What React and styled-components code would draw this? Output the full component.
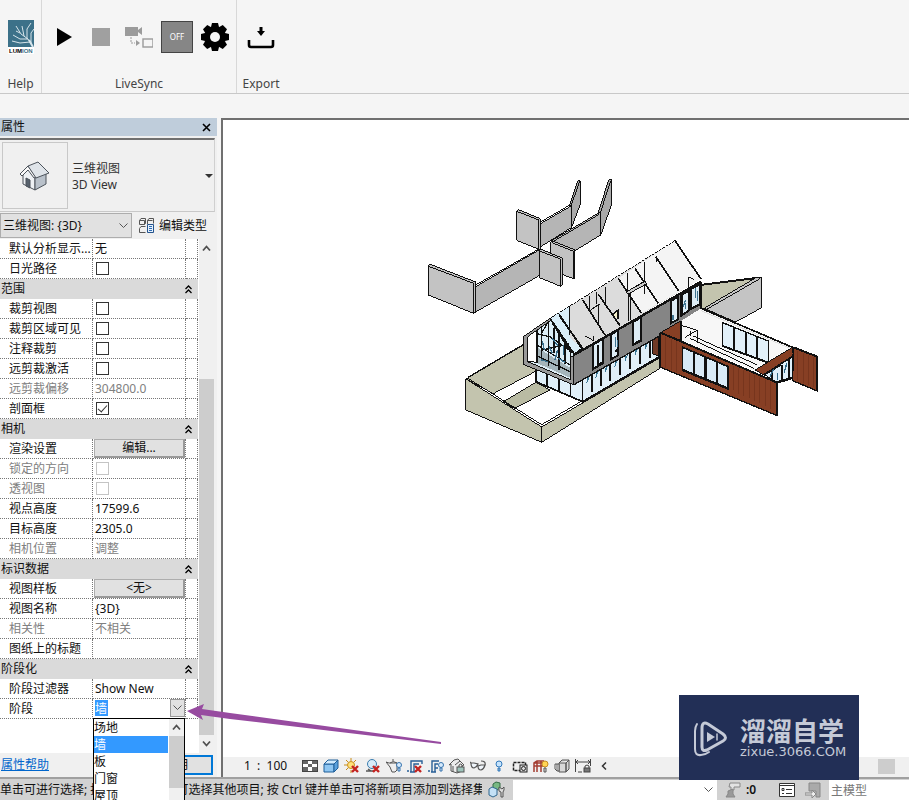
import React from "react";
import styled, { createGlobalStyle } from "styled-components";

export default function App() {
  return (
    <Page>
      <GlobalStyle />
      <Ribbon />
      <Workspace>
        <PropertiesPanel />
        <ViewWindow />
      </Workspace>
      <StatusBar />
      <Pointer viewBox="0 0 256 42" aria-hidden="true">
        <path d="M1 8 18 1 16 6 44 10 255 39 255 41 44 16 15 12 17 17Z" fill="#974ba0" />
      </Pointer>
      <Watermark>
        <BrandLogo />
        <div>
          <BrandName>溜溜自学</BrandName>
          <BrandUrl>zixue.3066.COM</BrandUrl>
        </div>
      </Watermark>
    </Page>
  );
}

/* ---------- ribbon ---------- */

function Ribbon() {
  return (
    <RibbonBar>
      <RibbonGroup>
        <Tools>
          <ToolButton aria-label="Help" $narrow>
            <LumionLogo />
          </ToolButton>
        </Tools>
        <GroupLabel>Help</GroupLabel>
      </RibbonGroup>
      <RibbonGroup>
        <Tools>
          <ToolButton aria-label="Play">
            <svg width="18" height="20" viewBox="0 0 18 20">
              <path d="M3 1 18 10 3 19Z" />
            </svg>
          </ToolButton>
          <ToolButton aria-label="Stop">
            <svg width="18" height="18">
              <rect width="18" height="18" fill="#a0a0a0" />
            </svg>
          </ToolButton>
          <ToolButton aria-label="Camera">
            <svg width="28" height="22" viewBox="0 0 28 22" fill="#9b9b9b">
              <path d="M0 1h13v3l4-3v8l-4-3v4H0Z" />
              <path d="M6 11v6h4" fill="none" stroke="#9b9b9b" strokeDasharray="2 1" />
              <path d="m11 14 4 3-4 3Z" />
              <rect x="18" y="13" width="10" height="8" fill="none" stroke="#9b9b9b" strokeWidth="1.4" />
            </svg>
          </ToolButton>
          <ToolButton aria-label="Live off">
            <OffBox>OFF</OffBox>
          </ToolButton>
          <ToolButton aria-label="Settings">
            <svg width="28" height="28" viewBox="-14 -14 28 28">
              {[0, 45, 90, 135].map((angle) => (
                <path key={angle} d="M-4-10-3-14H3L4-10V10L3 14H-3L-4 10Z" transform={`rotate(${angle})`} />
              ))}
              <circle r="10.5" />
              <circle r="5" fill="#f5f5f5" />
            </svg>
          </ToolButton>
        </Tools>
        <GroupLabel>LiveSync</GroupLabel>
      </RibbonGroup>
      <RibbonGroup $last>
        <Tools>
          <ToolButton aria-label="Export">
            <svg width="28" height="24" viewBox="0 0 28 24">
              <path d="M12.500 2h3v4H18l-4 5-4-5h2.500Z" />
              <path d="M2 15v5q0 2 2 2h20q2 0 2-2v-5" fill="none" stroke="#000" strokeWidth="2.600" />
            </svg>
          </ToolButton>
        </Tools>
        <GroupLabel>Export</GroupLabel>
      </RibbonGroup>
    </RibbonBar>
  );
}

function LumionLogo() {
  return (
    <svg width="26" height="34" viewBox="0 0 26 34">
      <rect width="26" height="34" fill="#fff" />
      <rect width="26" height="27" fill="#3c7189" />
      <g fill="none" stroke="#d6e4ea" strokeWidth="1">
        <path d="M25 27 20 19 13 14 8 6M16 16 14 6M19 19 19 9 23 3M20 19 12 19 5 15M22 22 12 23 4 21M23 24 23 13 26 9M8 11 12 13" />
        <path d="M25 27 21 20" strokeWidth="2" />
      </g>
      <text x="1" y="33" fontSize="6" fontWeight="700" fontFamily="Liberation Sans, sans-serif">
        LUM<tspan fill="#3c7189">ION</tspan>
      </text>
    </svg>
  );
}

/* ---------- properties panel ---------- */

const SECTIONS = [
  {
    rows: [
      { label: "默认分析显示...", text: "无" },
      { label: "日光路径", check: true },
    ],
  },
  {
    title: "范围",
    rows: [
      { label: "裁剪视图", check: true },
      { label: "裁剪区域可见", check: true },
      { label: "注释裁剪", check: true },
      { label: "远剪裁激活", check: true },
      { label: "远剪裁偏移", text: "304800.0", disabled: true },
      { label: "剖面框", check: true, checked: true },
    ],
  },
  {
    title: "相机",
    rows: [
      { label: "渲染设置", button: "编辑..." },
      { label: "锁定的方向", check: true, disabled: true },
      { label: "透视图", check: true, disabled: true },
      { label: "视点高度", text: "17599.6" },
      { label: "目标高度", text: "2305.0" },
      { label: "相机位置", text: "调整", disabled: true },
    ],
  },
  {
    title: "标识数据",
    rows: [
      { label: "视图样板", button: "<无>" },
      { label: "视图名称", text: "{3D}" },
      { label: "相关性", text: "不相关", disabled: true },
      { label: "图纸上的标题", text: "" },
    ],
  },
  {
    title: "阶段化",
    rows: [
      { label: "阶段过滤器", text: "Show New" },
      { label: "阶段", phase: true },
    ],
  },
];

const PHASES = ["场地", "墙", "板", "门窗", "屋顶"];

function PropertiesPanel() {
  return (
    <Panel>
      <PanelTitle>
        属性
        <CloseButton aria-label="Close">
          <svg width="9" height="9" viewBox="0 0 9 9">
            <path d="m1 1 7 7M8 1 1 8" stroke="#000" strokeWidth="1.600" />
          </svg>
        </CloseButton>
      </PanelTitle>
      <TypeSelector>
        <TypeThumb>
          <HouseIcon />
        </TypeThumb>
        <TypeName>
          三维视图
          <br />
          3D View
        </TypeName>
        <TypeArrow aria-label="Type">
          <svg width="8" height="4" viewBox="0 0 8 4">
            <path d="M0 0h8L4 4Z" fill="#333" />
          </svg>
        </TypeArrow>
      </TypeSelector>
      <FilterRow>
        <SelectWrap>
          <FilterSelect aria-label="View">
            <option>三维视图: {"{3D}"}</option>
          </FilterSelect>
          <Chevron />
        </SelectWrap>
        <EditType>
          <svg width="17" height="17" viewBox="0 0 17 17" fill="none" stroke="#555">
            <path d="M1.500 3.500 3 1.500h4.500v5l-1 1h-5ZM9.500 7V3.500L11 1.500h4.500v5M1.500 11.500 3 9.500h4.500M1.500 11.500v4h6M1.500 3.500h5v4M9.500 3.500h5" />
            <path d="M9.500 7.500h6v8h-6Z" fill="#e6f0fb" stroke="#24538c" />
            <path d="M11 9.500h3M11 11.500h3M11 13.500h3" stroke="#2c6cb5" />
          </svg>
          编辑类型
        </EditType>
      </FilterRow>
      <GridArea>
        <PropTable>
          <colgroup>
            <col />
            <col width="93" />
            <col width="12" />
          </colgroup>
          {SECTIONS.map((section, i) => (
            <tbody key={i}>
              {section.title && (
                <SectionRow>
                  <th colSpan="3">
                    <SectionHead>
                      {section.title}
                      <svg width="7" height="9" viewBox="0 0 7 9" fill="none" stroke="#000" strokeWidth="1.300">
                        <path d="m.5 4 3-3 3 3M.5 8l3-3 3 3" />
                      </svg>
                    </SectionHead>
                  </th>
                </SectionRow>
              )}
              {section.rows.map((row) => (
                <PropRow key={row.label} row={row} />
              ))}
            </tbody>
          ))}
        </PropTable>
        <ScrollTrack>
          <ArrowGlyph up />
          <ScrollThumb />
          <ArrowGlyph />
        </ScrollTrack>
      </GridArea>
      <PanelFooter>
        <a href="#help">属性帮助</a>
        <ApplyButton>应用</ApplyButton>
      </PanelFooter>
    </Panel>
  );
}

function PropRow({ row }) {
  const id = `prop-${row.label}`;
  const field = row.check || row.phase;
  return (
    <Row $disabled={row.disabled}>
      <LabelCell>{field ? <label htmlFor={id}>{row.label}</label> : row.label}</LabelCell>
      <ValueCell $flush={row.button || row.phase}>
        {row.text}
        {row.check && <Check id={id} type="checkbox" defaultChecked={row.checked} disabled={row.disabled} />}
        {row.button && <CellButton>{row.button}</CellButton>}
        {row.phase && <PhaseField id={id} />}
      </ValueCell>
      <td />
    </Row>
  );
}

function PhaseField({ id }) {
  return (
    <PhaseBox>
      <PhaseSelect id={id} defaultValue="墙">
        {PHASES.map((phase) => (
          <option key={phase}>{phase}</option>
        ))}
      </PhaseSelect>
      <PhaseArrow>
        <Chevron />
      </PhaseArrow>
      <PhaseMenu>
        <PhaseList role="listbox" aria-label="阶段">
          {PHASES.map((phase) => (
            <PhaseOption key={phase} role="option" aria-selected={phase === "墙"} $active={phase === "墙"}>
              {phase}
            </PhaseOption>
          ))}
        </PhaseList>
        <MenuTrack>
          <ArrowGlyph up />
          <MenuThumb />
        </MenuTrack>
      </PhaseMenu>
    </PhaseBox>
  );
}

function Chevron() {
  return (
    <svg width="9" height="6" viewBox="0 0 9 6" fill="none" stroke="#555">
      <path d="m.5.500 4 4 4-4" />
    </svg>
  );
}

function ArrowGlyph({ up }) {
  return (
    <svg width="9" height="7" viewBox="0 0 9 7" fill="none" stroke="#505050" strokeWidth="1.800">
      <path d={up ? "m1 5.500 3.500-4L8 5.500" : "m1 1.500 3.500 4L8 1.500"} />
    </svg>
  );
}

function HouseIcon() {
  return (
    <svg width="30" height="30" viewBox="0 0 30 30" stroke="#4c535b" strokeLinejoin="round">
      <path d="M3 14v9l12 6V15L9 8Z" fill="#eef1f4" />
      <path d="m15 17 11-6v12l-11 6Z" fill="#b9c1ca" />
      <path d="M0 13 8 5l8 11-2 1-6-8-6 6Z" fill="#fafafa" />
      <path d="m8 5 10-4 11 11-13 5Z" fill="#dfe4e9" />
      <path d="M6 17v8l4 2v-8Z" fill="#56616c" />
    </svg>
  );
}

/* ---------- view window ---------- */

const VIEW_TOOLS = [
  [
    "Detail level",
    <g key="i">
      <rect x=".5" y="2.500" width="15" height="11" fill="#fff" stroke="#444" />
      <path d="M1 3h5v3H1Zm9 0h5v3h-5ZM6 6h4v3H6ZM1 9h5v4H1Zm9 0h5v4h-5Z" fill="#666" />
    </g>,
  ],
  [
    "Visual style",
    <g key="i" stroke="#1f5f99" strokeLinejoin="round">
      <path d="M1 6h10v8H1Z" fill="#8ec6f2" />
      <path d="m1 6 4-4h10l-4 4Z" fill="#d1eafd" />
      <path d="m11 6 4-4v8l-4 4Z" fill="#5aa0dc" />
    </g>,
  ],
  [
    "Sun path",
    <g key="i">
      <path d="M7 0v3M7 12v3M0 7h3M2 2l2 2M12 2l-2 2M2 12l2-2" stroke="#c98c17" />
      <circle cx="7" cy="7" r="3.500" fill="#ffe27a" stroke="#c98c17" />
      <RedCross />
    </g>,
  ],
  [
    "Shadows",
    <g key="i">
      <circle cx="7" cy="6" r="4.500" fill="#d8ebf8" stroke="#3a7cae" />
      <path d="M1 13h8M3 11l3 2" stroke="#555" strokeWidth="1.500" />
      <RedCross />
    </g>,
  ],
  [
    "Rendering",
    <g key="i" fill="#eee" stroke="#555">
      <path d="M4 5h7v7l-2 2H6L4 9 0 4l3 1ZM4 5q3-3 7 0M7 3V1" />
      <Bulb />
    </g>,
  ],
  [
    "Crop view",
    <g key="i" fill="none" stroke="#285f97" strokeWidth="1.400">
      <path d="M4 14V3h11v3M0 13h2M7 14V6h5M3 14h5" />
      <RedCross />
    </g>,
  ],
  [
    "Crop region",
    <g key="i" fill="none" stroke="#285f97" strokeWidth="1.400">
      <path d="M4 14V3h7M0 13h2M7 14V6h3M3 14h5M7 10h3" />
      <Bulb />
    </g>,
  ],
  [
    "Locked view",
    <g key="i" stroke="#555" fill="#ececec">
      <path d="M2 13V6L0 7l5-5 4-1 6 6-2 1v5L8 15Z" />
      <path d="M4 8v6M6 7l5-4" />
      <rect x="8" y="9" width="7" height="5" fill="#9ec4bb" />
      <path d="M10 9V7q2-2 3 0v2" fill="none" />
    </g>,
  ],
  [
    "Temporary hide",
    <g key="i" fill="#eef4fa" stroke="#555" strokeWidth="1.200">
      <path d="M1 5q0 5 3 5 3-1 4-4L4 5ZM8 8q0 4 3 4 3-1 4-5l-4 0Z" />
      <path d="M1 5 0 4M15 7q1-4-4-4" fill="none" />
    </g>,
  ],
  [
    "Reveal hidden",
    <g key="i">
      <circle cx="8" cy="6" r="3" fill="#c5e3fc" stroke="#3279bb" />
      <path d="M7 10h2v3H7Z" fill="#8cb5d8" stroke="#3279bb" />
    </g>,
  ],
  [
    "View properties",
    <g key="i" fill="none" stroke="#222">
      <path d="M1.500 4.500h12v8h-12Z" strokeDasharray="3 1" strokeWidth="1.500" />
      <rect x="8" y="7" width="7" height="7" fill="#ddd" />
      <circle cx="11.500" cy="10.500" r="2" />
    </g>,
  ],
  [
    "Analytical model",
    <g key="i" fill="none" stroke="#a33c31">
      <path d="M1 14V5l3-2h7M1 8h9M4 14V3M8 14V3M1 5h8" strokeWidth="1.500" />
      <circle cx="12" cy="6" r="3" fill="#ffd455" stroke="#c68a22" />
      <path d="M11 10h2v4h-2Z" stroke="#555" fill="#ddd" />
    </g>,
  ],
  [
    "Displacement",
    <g key="i" fill="#d8d8d8" stroke="#555">
      <path d="m5 5 3-3h7l-3 3v9l3-3V2M5 5h7v9H5Z" />
      <path d="M5 6H1v5l2 2h2ZM3 6v7" fill="#fff" />
    </g>,
  ],
  [
    "Constraints",
    <g key="i" fill="none" stroke="#444">
      <path d="M.5 1v13M15.500 1v7M1 4h14M3 2 1 4l2 2M13 2l2 2-2 2M3 14h4" />
      <rect x="9" y="10" width="6" height="4" fill="#777" />
      <path d="M10 10V8q2-2 4 0v2" />
    </g>,
  ],
];

function RedCross() {
  return <path d="m8 8 6 6M14 8l-6 6" fill="none" stroke="#c32320" strokeWidth="2.400" />;
}

function Bulb() {
  return (
    <g fill="#d6eafc" stroke="#3673ad" strokeWidth="1">
      <circle cx="13" cy="7" r="2.500" />
      <path d="M12 10h2v3h-2Z" />
    </g>
  );
}

function ViewWindow() {
  return (
    <ViewPane>
      <Canvas>
        <Model />
      </Canvas>
      <ViewBar>
        <Scale>{"1  :  100"}</Scale>
        {VIEW_TOOLS.map(([name, art]) => (
          <ViewTool key={name} aria-label={name}>
            <svg width="16" height="16" viewBox="0 0 16 16">
              {art}
            </svg>
          </ViewTool>
        ))}
        <ViewTool aria-label="Collapse">
          <svg width="6" height="8" viewBox="0 0 6 8">
            <path d="M5 .5 1.500 4 5 7.500" fill="none" stroke="#333" strokeWidth="1.500" />
          </svg>
        </ViewTool>
        <HorizontalThumb />
      </ViewBar>
    </ViewPane>
  );
}

function Model() {
  return (
    <ModelSvg viewBox="420 170 410 280" role="img" aria-label="3D View">
      <FreeWalls />
      <House />
      <Wing />
    </ModelSvg>
  );
}

// each part of the model is drawn in thirds of a pixel
function FreeWalls() {
  return (
    <g transform="translate(415 170) scale(.33333)" fill="#c3c3c3" stroke="#111" strokeWidth="3">
      <path d="m463 108 25-76 8 0v70l-26 70-2-64Z" fill="#aaa" />
      <path d="m468 108 26-74" />
      <path d="m375 162 93-54 2 64-85 53-10 10Z" fill="#b5b5b5" />
      <path d="m375 157 90-52" />
      <path d="m305 122 5-3 66 27v90l-3 2-68-27Z" />
      <path d="m305 124 67 26v86M376 148v88" fill="none" />
      <path d="m549 130 32-100 9 0v73l-33 93-3-66Z" fill="#aaa" />
      <path d="m555 132 32-100" />
      <path d="m408 213 141-83 8-2v67l-77 47Z" fill="#b5b5b5" />
      <path d="m410 217 143-84" />
      <path d="m408 215 5-2 67 27v84l-5 2-67-26Z" />
      <path d="m411 218 64 26v80" fill="none" />
      <path d="m182 350 190-110 2 76-192 110Z" fill="#b5b5b5" />
      <path d="m182 345 190-108" />
      <path d="m374 240 4-2 64 26v82l-5 3-63-26Z" />
      <path d="m374 243 62 24v80" fill="none" />
      <path d="m40 286 6-3 136 53v90l-6 4-136-55Z" />
      <path d="m41 289 135 51v88" fill="none" />
    </g>
  );
}

const GROUND_MULLIONS = [411, 438, 466, 495, 526, 556, 586];
const WALL_WINDOWS = [
  "M415 328 443 312V385L415 402Z",
  "M467 299 490 286V360L467 374Z",
  "M533 262 557 248V318L533 330Z",
  "M647 198 670 185V253L647 265Z",
  "M682 178 703 166V226L682 240Z",
  "M709 162 735 147V208L709 221Z",
];

function House() {
  return (
    <g transform="translate(455 235) scale(.33333)" fill="none" stroke="#111" strokeWidth="3">
      <g fill="#c3c4ae">
        <path d="m33 432 172-102 8 58 60 25-158 63Z" />
        <path d="m115 476 125-66 6 30-101 60Z" fill="#fff" stroke="none" />
        <path d="m145 500 98-58 42 23-107 55Z" fill="#b9bba3" />
        <path d="m33 432 227 144v46L33 525Z" />
        <path d="m260 576 355-208 3 30-358 224Z" />
      </g>
      <path d="m39 430 221 139 352-207M38 427l167-99M115 476l125-66" />
      <path d="m243 398 112 42 257-145v72L383 500l-140-60Z" fill="#e0eff8" />
      <path d="m243 440 140 60 230-135" strokeWidth="5" />
      <path d="M243 405v36M276 410v46M312 430v42M347 445v42M383 438v62" strokeWidth="5" />
      {GROUND_MULLIONS.map((x) => (
        <g key={x}>
          <path d={`M${x} ${436 - (x - 383) * 0.58}v50`} strokeWidth="5" />
          <path d={`m${x - 8} ${440 - (x - 383) * 0.58}-8 20m2-14v12`} stroke="#3a7795" strokeWidth="3" />
        </g>
      ))}
      <path d="m592 310 20-14v68l-20-8Z" fill="#703a26" />

      <path d="m285 250 375-233 78 115-381 228Z" fill="#dcdcdc" stroke="none" />
      <path d="m490 130 170-113 78 115-178 103Z" fill="#f4f4f4" stroke="none" />
      <path d="m285 250 60-38v95l35 33-24 20Z" fill="#d9edf8" stroke="none" />
      <path d="m285 250 375-233" strokeDasharray="9 3" />
      <path d="m660 17 78 115M602 65l68 102M540 100l70 105M490 130l70 105M430 178l65 94M383 195l67 105M313 238l67 102" strokeWidth="5" />
      <path d="M343 213v88M404 183v44l28-18v64M452 155v52M568 82v58M518 115v54l52-32M520 176v82M528 172v82M568 140v38M412 220l24-14M424 172v36" />
      <path d="m515 170 56-31 3 8-56 31Z" fill="#ccc" />
      <path d="m474 239 15-14v28" fill="#f5f0cb" strokeWidth="4" />
      <path d="M700 126v50M700 126l18 8M604 68v14M390 303l26 14v-14" />

      <path d="m357 360 381-220v92L355 450Z" fill="#858585" stroke="none" />
      <path d="m612 296 126-74v10l-126 74Z" fill="#aaa" stroke="none" />
      <path d="m357 360 381-220" strokeWidth="7" />
      <path d="m355 450 383-218v-92" strokeWidth="4" />
      {WALL_WINDOWS.map((d) => (
        <path key={d} d={d} fill="#ddecf5" strokeWidth="6" />
      ))}
      <path d="M428 330v60l14-8M479 350l8-5M546 322l10-6M678 178v68M707 163v58" strokeWidth="6" />
      <path d="m692 195-8 20m8-10v16M722 158v30m5-20v30M481 305v30m6-20v20M654 240v14" stroke="#3d7390" strokeWidth="4" />

      <path d="m205 305 80-55 72 110v90l-152-62Z" fill="#dcedf6" />
      <path d="m218 302 26-18v98l-26-4Z" fill="#fff" />
      <path d="m250 340 95 58v30l-95-42Z" fill="#a4b4ba" stroke="none" />
      <path d="M246 285v98M260 275v90M281 258v136M313 285v120M347 335v96M298 280v74M330 312v74" strokeWidth="5" />
      <path d="m246 330 110 66M246 296l40 10 58 40M250 365l95 45M262 345l80-18M285 252l-24 40" strokeWidth="4" />
      <path d="m262 318 6 26m14-10 10 20m16-10-8 30m26-44v30m-34-50 16 22m-50 42 20 6m32-10 20 12" stroke="#356c8a" strokeWidth="4" />
      <path d="m205 305 80-55 4 5-71 50v75l130 55v-70h9v85l-152-62Z" fill="#9a9a9a" />
      <path d="m285 250 72 106M291 262l58 92M313 242l70 98-26 18" strokeWidth="5" />
    </g>
  );
}

function Wing() {
  return (
    <g transform="translate(640 260) scale(.33333)" fill="none" stroke="#111" strokeWidth="3">
      <path d="m183 76 160-20-150 90-8 0Z" fill="#c3c4ae" />
      <path d="m192 145 156-92h17v90l-78 43Z" fill="#c4c4c4" />
      <path d="m200 148 160-92M185 73l160-20" />
      <path d="m183 145 277 118-110 72-225-93v-60Z" fill="#f7f7f7" stroke="none" />
      <path d="m183 145 277 118" strokeWidth="5" />
      <path d="m183 152 268 113" stroke="#ddd" />
      <path d="M124 183v60M124 196l48 15v38M150 235l192 90M160 228l30 14 160 72M135 232l34-20M152 212v17" />
      <path d="m248 188 137 55v64l-137-50Z" fill="#e2f0f9" strokeWidth="4" />
      <path d="M283 204v66M318 218v66M352 231v66" strokeWidth="6" />
      <path d="m248 258 137 50" strokeWidth="6" />
      <path d="m372 342 85-50v64l-46 14Z" fill="#dff0fa" />
      <path d="M396 330v30M426 314v50M448 298v62M372 345l50-30M411 366l46-14" strokeWidth="5" />
      <path d="m440 310-8 30m-30-16-12 26m22-12v22" stroke="#316a88" strokeWidth="4" />
      <path d="m345 330 112-68 3 24-90 58Z" fill="#873f24" />
      <path d="m460 262 72 28v103l-74-31Z" fill="#873f24" strokeWidth="4" />
      <path d="m62 218 60-35v58Z" fill="#873f24" />
      <path d="m62 218 350 150v99L62 322Z" fill="#873f24" strokeWidth="4" />
      <path
        d="M78 230v94M94 236v94M110 243v94M280 318v72M296 325v76M312 331v76M328 338v76M344 346v78M360 352v78M376 359v78M392 366v80M474 272v90M490 278v90M506 284v92M520 290v92"
        stroke="#6f301a"
        strokeWidth="2"
      />
      <path d="m62 218 350 150v99" strokeWidth="6" />
      <path d="m460 262 72 28v103" strokeWidth="6" />
      <path d="m128 262 137 58v66L128 330Z" fill="#d9eaf6" strokeWidth="5" />
      <path d="M162 277v66M197 291v66M232 306v66M128 330l137 56" strokeWidth="7" />
      <path d="m60 218v105" strokeWidth="5" />
    </g>
  );
}

/* ---------- status bar and watermark ---------- */

function StatusBar() {
  return (
    <Status>
      <Hint>单击可进行选择; 按 Tab 键并单击可选择其他项目; 按 Ctrl 键并单击可将新项目添加到选择集。</Hint>
      <StatusIcon aria-label="Worksets">
        <svg width="17" height="17" viewBox="0 0 17 17" strokeLinejoin="round">
          <path d="m5 3 3-2 4 1v5l-3 2-4-2Z" fill="#78b883" stroke="#346c45" />
          <path d="m1 8 3-2 5 2v6l-4 2-4-2Z" fill="#c3e0f5" stroke="#31678e" />
          <path d="M11 6v4l2 1v5h2v-5l1-2V6l-2 2Z" fill="#ddd" stroke="#555" />
        </svg>
      </StatusIcon>
      <WorksetSelect>
        <BareSelect aria-label="Workset" />
        <Chevron />
      </WorksetSelect>
      <StatusIcon aria-label="Editing requests">
        <svg width="16" height="16" viewBox="0 0 16 16" fill="#e2e2e2" stroke="#888">
          <path d="M5 1h10v4H9v3H6V5H4Z" />
          <path d="m3 9 5-2v5l2 3H1l2-3Z" fill="#999" />
        </svg>
      </StatusIcon>
      <Count>:0</Count>
      <StatusIcon aria-label="Design options">
        <svg width="16" height="16" viewBox="0 0 16 16" fill="#fff" stroke="#333">
          <path d="M.5 1.500h15v13H.5Z" />
          <path d="M1 3.500h14M3 6.500h2v2H3ZM7 7.500h6M3 11.500h2M7 11.500h6" />
        </svg>
      </StatusIcon>
      <StatusIcon aria-label="Active option">
        <svg width="16" height="16" viewBox="0 0 16 16" fill="#aaa" stroke="#888">
          <path d="M4 1h11v14h-4V9H4Z" />
          <path d="M0 11h7V8l4 4-4 4v-3H0Z" fill="#eee" />
        </svg>
      </StatusIcon>
      <OptionSelect aria-label="Design option">
        <option>主模型</option>
      </OptionSelect>
    </Status>
  );
}

function BrandLogo() {
  return (
    <svg width="34" height="38" viewBox="0 0 34 38" fill="none" stroke="#c5cad7" strokeLinecap="round">
      <path d="M8 9v19q0 5 5 3l16-9q5-3 0-7L14 5Q8 2 8 9Z" strokeWidth="3" strokeLinejoin="round" />
      <path d="M3 5q-2 3-2 7v18q0 7 6 6 4 0 8-3" strokeWidth="2" />
      <path d="m13 13 8 5-8 5Z" fill="#c5cad7" stroke="none" />
      <path d="M23 15v6" strokeWidth="1.500" />
    </svg>
  );
}

/* ---------- styles ---------- */

const GlobalStyle = createGlobalStyle`
  * {
    box-sizing: border-box;
  }

  body {
    margin: 0;
    background: #f5f5f5;
    overflow: hidden;
  }

  body, button, select, input {
    font-family: "Noto Sans", "Noto Sans CJK SC", sans-serif;
    font-size: 12px;
    line-height: 16px;
    color: #111;
  }

  svg {
    display: block;
    flex: none;
  }
`;

const Page = styled.div`
  position: relative;
  height: 100vh;
  overflow: hidden;
  display: flex;
  flex-direction: column;
`;

const PlainButton = styled.button`
  border: none;
  background: none;
  padding: 0;
  display: flex;
  align-items: center;
  justify-content: center;
`;

const RibbonBar = styled.header`
  display: flex;
  flex: none;
  height: 94px;
  margin-bottom: 24px;
  border-bottom: 1px solid #c8c8c8;
`;

const RibbonGroup = styled.section`
  padding: 0 ${({ $last }) => ($last ? "5px" : "2px")};
  border-right: ${({ $last }) => ($last ? "none" : "1px solid #d8d8d8")};
`;

const Tools = styled.div`
  display: flex;
  justify-content: center;
  height: 74px;
`;

const ToolButton = styled(PlainButton)`
  width: ${({ $narrow }) => ($narrow ? "37px" : "38px")};
`;

const GroupLabel = styled.div`
  text-align: center;
  line-height: 20px;
  color: #444;
`;

const OffBox = styled.span`
  width: 32px;
  height: 32px;
  border: 1px solid #444;
  background: #868686;
  color: #fff;
  font-size: 8px;
  line-height: 30px;
`;

const Workspace = styled.main`
  display: flex;
  flex: 1;
  min-height: 0;
  gap: 4px;
`;

const Panel = styled.aside`
  display: flex;
  flex-direction: column;
  width: 217px;
  flex: none;
  background: #f0f0f0;
`;

const PanelTitle = styled.div`
  display: flex;
  justify-content: space-between;
  align-items: center;
  height: 18px;
  flex: none;
  margin-bottom: 2px;
  padding: 0 6px 0 1px;
  background: #bfcddb;
`;

const CloseButton = styled(PlainButton)`
  width: 9px;
  height: 16px;
`;

const TypeSelector = styled.div`
  display: flex;
  align-items: center;
  gap: 4px;
  margin-right: 2px;
  padding: 2px 1px 2px 2px;
  border-top: 2px solid #707070;
  border-right: 1px solid #d0d0d0;
  border-bottom: 1px solid #c8c8c8;
`;

const TypeThumb = styled.div`
  display: flex;
  align-items: center;
  justify-content: center;
  width: 66px;
  height: 67px;
  border: 1px solid #c8c8c8;
`;

const TypeName = styled.div`
  flex: 1;
  padding-top: 2px;
  color: #333;
`;

const TypeArrow = styled(PlainButton)`
  width: 8px;
  height: 20px;
`;

const FilterRow = styled.div`
  display: flex;
  align-items: center;
  gap: 6px;
  height: 27px;
  flex: none;
`;

const SelectWrap = styled.div`
  display: grid;
  align-items: center;
  width: 132px;

  > * {
    grid-area: 1 / 1;
  }

  > svg {
    justify-self: end;
    margin-right: 4px;
    pointer-events: none;
  }
`;

const BareSelect = styled.select`
  appearance: none;
  border: none;
  background: transparent;
  padding: 0;
  width: 100%;
  height: 100%;
`;

const FilterSelect = styled(BareSelect)`
  height: 25px;
  padding-left: 2px;
  border: 1px solid #adadad;
  background: #e1e1e1;
`;

const EditType = styled(PlainButton)`
  gap: 4px;
`;

const GridArea = styled.div`
  display: flex;
  flex: 1;
  align-items: flex-start;
  gap: 1px;
  background: #fff;
  margin-right: 3px;
`;

const PropTable = styled.table`
  flex: 1;
  table-layout: fixed;
  border-collapse: separate;
  border-spacing: 0;

  td,
  th {
    height: 20px;
    padding: 0;
    text-align: left;
    font-weight: 400;
    white-space: nowrap;
  }

  td {
    border-right: 1px dotted #777;
    border-bottom: 1px dotted #777;
  }
`;

const SectionRow = styled.tr`
  background: #dadada;
`;

const SectionHead = styled.div`
  display: flex;
  justify-content: space-between;
  align-items: center;
  padding: 0 6px 0 1px;
`;

const Row = styled.tr`
  color: ${({ $disabled }) => ($disabled ? "#808080" : "#111")};
`;

const LabelCell = styled.td`
  && {
    padding-left: 9px;
  }
`;

const ValueCell = styled.td`
  && {
    padding-left: ${({ $flush }) => ($flush ? "1px" : "2px")};
  }
`;

const Check = styled.input`
  appearance: none;
  display: flex;
  justify-content: center;
  width: 13px;
  height: 13px;
  margin: 0 0 0 1px;
  border: 1px solid ${({ disabled }) => (disabled ? "#c4c4c4" : "#333")};
  background: #fff;

  &:checked::before {
    content: "";
    width: 4px;
    height: 8px;
    border: solid #333;
    border-width: 0 1px 1px 0;
    transform: rotate(42deg);
  }
`;

const CellButton = styled.button`
  display: block;
  width: 100%;
  height: 19px;
  padding: 0;
  border: 1px solid #adadad;
  border-right: 2px solid #999;
  border-bottom: 2px solid #999;
  background: #e1e1e1;
  line-height: 16px;
`;

const PhaseBox = styled.div`
  position: relative;
  display: flex;
  height: 19px;
`;

const PhaseSelect = styled(BareSelect)`
  flex: 1;
  min-width: 0;
  padding-left: 1px;
  color: #fff;
  background: linear-gradient(#3399ff, #3399ff) 1px 1px / 13px 16px no-repeat;

  option {
    color: #111;
  }
`;

const PhaseArrow = styled.span`
  display: flex;
  align-items: center;
  justify-content: center;
  width: 15px;
  height: 18px;
  border: 1px solid #999;
  background: #e1e1e1;
  pointer-events: none;
`;

const PhaseMenu = styled.div`
  position: absolute;
  top: 19px;
  left: -1px;
  right: 0;
  z-index: 2;
  display: flex;
  gap: 1px;
  border: 1px solid #000;
  background: #fff;
`;

const PhaseList = styled.ul`
  flex: 1;
  margin: 0;
  padding: 0;
  list-style: none;
`;

const PhaseOption = styled.li`
  height: 17px;
  line-height: 17px;
  color: ${({ $active }) => ($active ? "#fff" : "#111")};
  background: ${({ $active }) => ($active ? "#3399ff" : "#fff")};
`;

const MenuTrack = styled.div`
  display: flex;
  flex-direction: column;
  align-items: center;
  gap: 5px;
  width: 15px;
  padding-top: 5px;
  background: #f0f0f0;
`;

const MenuThumb = styled.div`
  width: 15px;
  height: 52px;
  background: #cdcdcd;
`;

const ScrollTrack = styled.div`
  display: flex;
  flex-direction: column;
  align-items: center;
  justify-content: space-between;
  align-self: stretch;
  width: 15px;
  padding: 6px 0;
  background: #f0f0f0;
`;

const ScrollThumb = styled.div`
  width: 15px;
  height: 71%;
  margin-top: auto;
  margin-bottom: 5px;
  background: #cdcdcd;
`;

const PanelFooter = styled.div`
  display: flex;
  justify-content: space-between;
  align-items: center;
  height: 24px;
  flex: none;
  padding: 0 4px 1px 1px;

  a {
    color: #0066cc;
  }
`;

const ApplyButton = styled.button`
  width: 73px;
  height: 20px;
  padding: 0;
  border: 2px solid #0078d7;
  background: #e1e1e1;
`;

const ViewPane = styled.section`
  display: flex;
  flex-direction: column;
  flex: 1;
  min-width: 0;
  border-top: 2px solid #707070;
  border-left: 2px solid #707070;
`;

const Canvas = styled.div`
  flex: 1;
  min-height: 0;
  padding: 50px 0 0 197px;
  background: #fff;
`;

const ModelSvg = styled.svg`
  width: 410px;
  height: 280px;
  shape-rendering: crispEdges;
`;

const ViewBar = styled.div`
  display: flex;
  align-items: center;
  height: 20px;
  flex: none;
  padding: 0 0 2px 21px;
  background: #f0f0f0;
`;

const Scale = styled.span`
  width: 55px;
  white-space: pre;
`;

const ViewTool = styled(PlainButton)`
  width: 21px;
`;

const HorizontalThumb = styled.div`
  width: 17px;
  height: 15px;
  margin: 0 14px 0 auto;
  background: #cdcdcd;
`;

const Status = styled.footer`
  display: flex;
  align-items: center;
  height: 23px;
  flex: none;
  border-top: 2px solid #a0a0a0;
  background: #d2d2d2;
`;

const Hint = styled.div`
  width: 482px;
  overflow: hidden;
  white-space: nowrap;
`;

const StatusIcon = styled(PlainButton)`
  width: 24px;
  margin-left: 2px;
`;

const WorksetSelect = styled(SelectWrap)`
  flex: 1;
  align-self: stretch;
  margin: 1px 2px 0 5px;
  background: #fff;
`;

const Count = styled.span`
  width: 28px;
  padding-left: 1px;
  font-weight: 600;
`;

const OptionSelect = styled(BareSelect)`
  width: 80px;
  margin: 2px 0 0 4px;
  padding-left: 2px;
  color: #777;
  background: #fff;
`;

const Pointer = styled.svg`
  position: absolute;
  top: 703px;
  left: 186px;
  width: 256px;
  height: 42px;
  z-index: 3;
`;

const Watermark = styled.div`
  position: absolute;
  right: 50px;
  bottom: 20px;
  z-index: 4;
  display: flex;
  align-items: center;
  gap: 12px;
  width: 180px;
  height: 85px;
  padding-left: 15px;
  background: #222f56;
  color: #c5cad7;
`;

const BrandName = styled.div`
  font-size: 26px;
  font-weight: 700;
  line-height: 28px;
`;

const BrandUrl = styled.div`
  font-family: "DejaVu Sans", sans-serif;
  font-size: 13px;
  line-height: 14px;
`;
